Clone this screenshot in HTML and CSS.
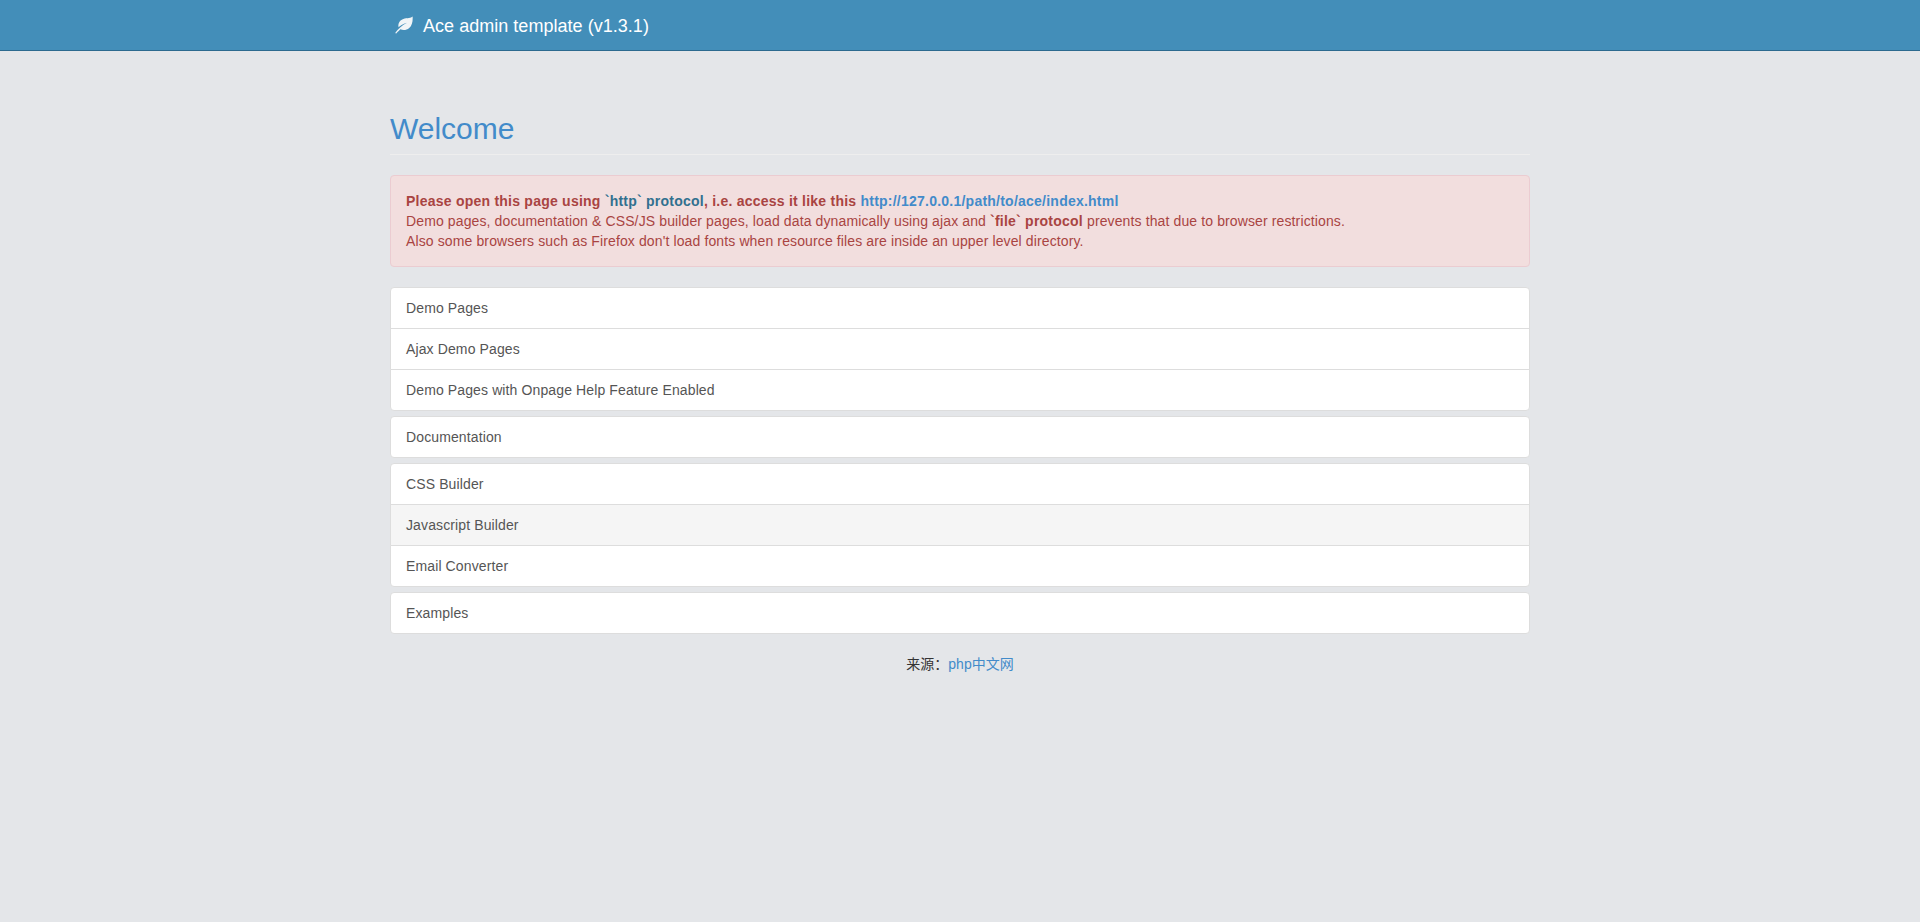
FILE: index.html
```html
<!DOCTYPE html>
<html lang="en">
<head>
<meta charset="utf-8">
<title>Ace admin template</title>
<link rel="stylesheet" href="styles.css">
</head>
<body>
<header class="navbar">
  <div class="container">
    <a class="brand" href="#">
      <svg class="leaf" viewBox="0 0 20 20" aria-hidden="true"><path d="M19.6 0.6C19.9 5.6 19 10.6 15.8 13.4C12.8 16 8.8 16.2 6 14.8C5.2 15.6 3.2 17.6 1.6 19.2C1 19.8 -0.1 19 0.6 18.2C3.6 14.8 7.8 10.2 13.4 7.6C8.6 8.6 5.2 11.4 4 12.6C3 8.8 4.6 5.6 8 3.8C11.4 2 16.4 3 19.6 0.6Z"/></svg>
      <span>Ace admin template (v1.3.1)</span>
    </a>
  </div>
</header>
<main class="container">
  <h2 class="page-title">Welcome</h2>
  <div class="alert">
    <strong>Please open this page using <span class="info">`http` protocol</span>, i.e. access it like this <a href="#">http://127.0.0.1/path/to/ace/index.html</a></strong><br>
    Demo pages, documentation &amp; CSS/JS builder pages, load data dynamically using ajax and <strong>`file` protocol</strong> prevents that due to browser restrictions.<br>
    Also some browsers such as Firefox don't load fonts when resource files are inside an upper level directory.
  </div>
  <div class="list-group">
    <a class="item" href="#">Demo Pages</a>
    <a class="item" href="#">Ajax Demo Pages</a>
    <a class="item" href="#">Demo Pages with Onpage Help Feature Enabled</a>
  </div>
  <div class="list-group">
    <a class="item" href="#">Documentation</a>
  </div>
  <div class="list-group">
    <a class="item" href="#">CSS Builder</a>
    <a class="item hover" href="#">Javascript Builder</a>
    <a class="item" href="#">Email Converter</a>
  </div>
  <div class="list-group">
    <a class="item" href="#">Examples</a>
  </div>
  <p class="source">来源：<a href="#">php中文网</a></p>
</main>
</body>
</html>
```
FILE: styles.css
```css
* { box-sizing: border-box; }
html, body { margin: 0; height: 100%; }
body {
  background: #e4e6e9;
  color: #333;
  font-family: "Liberation Sans", "Noto Sans CJK SC", sans-serif;
  font-size: 14px;
  line-height: 20px;
  letter-spacing: 0.12px;
}
a { color: #428bca; text-decoration: none; }
.container { width: 1170px; margin: 0 auto; padding: 0 15px; }
.navbar { height: 51px; background: #438eb9; border-bottom: 1px solid #2c6a8f; }
.brand { display: inline-flex; align-items: center; gap: 10px; height: 52px; padding-left: 5px; color: #fff; font-size: 18px; letter-spacing: 0.03px; }
.leaf { width: 18px; height: 18px; fill: #f1f5f7; margin-top: -3px; }
.page-title {
  margin: 60px 0 20px;
  padding: 1px 0 9px;
  border-bottom: 1px solid #eee;
  color: #428bca;
  font-size: 30px;
  font-weight: 400;
  line-height: 33px;
  letter-spacing: 0;
}
.alert {
  padding: 15px;
  margin-bottom: 20px;
  background: #f2dede;
  border: 1px solid #ebccd1;
  border-radius: 4px;
  color: #a94442;
}
.alert strong { letter-spacing: 0.235px; }
.info { color: #31708f; }
.list-group { margin-bottom: 5px; }
.item {
  display: block;
  padding: 10px 15px;
  margin-bottom: -1px;
  background: #fff;
  border: 1px solid #ddd;
  color: #555;
}
.item:first-child { border-radius: 4px 4px 0 0; }
.item:last-child { border-radius: 0 0 4px 4px; margin-bottom: 0; }
.item:only-child { border-radius: 4px; }
.item.hover { background: #f5f5f5; }
.source { margin: 20px 0 0; text-align: center; letter-spacing: 0; }
```
